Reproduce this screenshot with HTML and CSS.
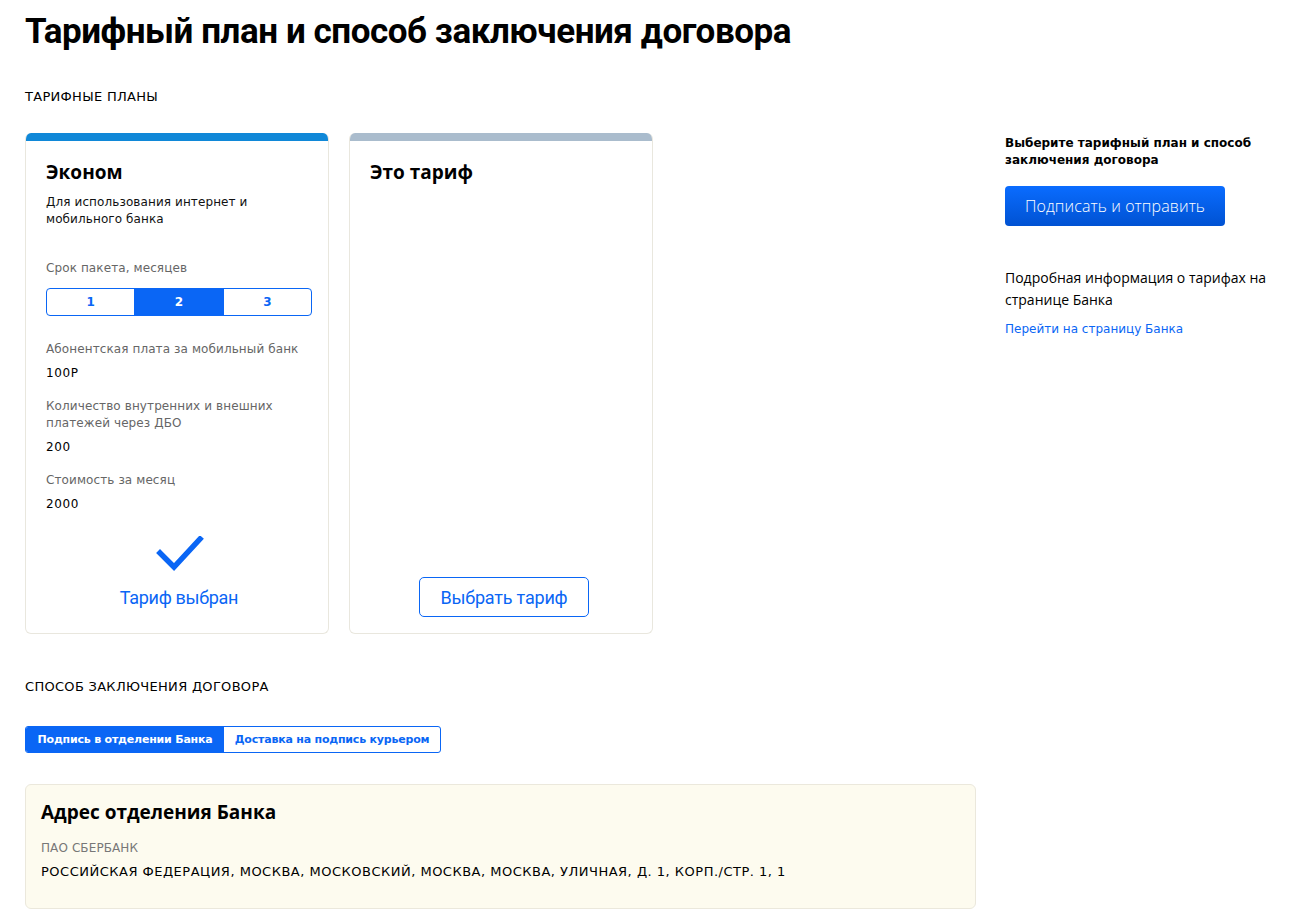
FILE: index.html
```html
<!DOCTYPE html>
<html lang="ru">
<head>
<meta charset="utf-8">
<title>Тарифный план</title>
<link rel="stylesheet" href="styles.css">
</head>
<body>
<div class="page">
  <h1 class="page-title">Тарифный план и способ заключения договора</h1>
  <div class="layout">
    <main class="main">
      <div class="section-label">ТАРИФНЫЕ ПЛАНЫ</div>
      <div class="cards">
        <div class="card card-selected">
          <div class="card-bar"></div>
          <div class="card-body">
            <div class="card-title">Эконом</div>
            <div class="card-desc">Для использования интернет и мобильного банка</div>
            <div class="field-label term-label">Срок пакета, месяцев</div>
            <div class="segment">
              <div class="seg-item">1</div>
              <div class="seg-item seg-active">2</div>
              <div class="seg-item">3</div>
            </div>
            <div class="field">
              <div class="field-label">Абонентская плата за мобильный банк</div>
              <div class="field-value">100Р</div>
            </div>
            <div class="field">
              <div class="field-label">Количество внутренних и внешних платежей через ДБО</div>
              <div class="field-value">200</div>
            </div>
            <div class="field">
              <div class="field-label">Стоимость за месяц</div>
              <div class="field-value">2000</div>
            </div>
            <div class="card-footer">
              <svg class="check" width="50" height="40" viewBox="0 0 50 40">
                <path d="M6 17 L20 31 L46 3" fill="none" stroke="#0a66f5" stroke-width="5.5" stroke-linecap="square"/>
              </svg>
              <div class="chosen">Тариф выбран</div>
            </div>
          </div>
        </div>
        <div class="card">
          <div class="card-bar bar-gray"></div>
          <div class="card-body">
            <div class="card-title">Это тариф</div>
            <div class="card-footer">
              <button class="btn-outline">Выбрать тариф</button>
            </div>
          </div>
        </div>
      </div>

      <div class="section-label method-label">СПОСОБ ЗАКЛЮЧЕНИЯ ДОГОВОРА</div>
      <div class="tabs">
        <div class="tab tab-active">Подпись в отделении Банка</div>
        <div class="tab">Доставка на подпись курьером</div>
      </div>

      <div class="address">
        <div class="address-title">Адрес отделения Банка</div>
        <div class="address-org">ПАО СБЕРБАНК</div>
        <div class="address-text">РОССИЙСКАЯ ФЕДЕРАЦИЯ, МОСКВА, МОСКОВСКИЙ, МОСКВА, МОСКВА, УЛИЧНАЯ, Д. 1, КОРП./СТР. 1, 1</div>
      </div>
    </main>
    <aside class="aside">
      <div class="aside-title">Выберите тарифный план и способ заключения договора</div>
      <button class="btn-primary">Подписать и отправить</button>
      <div class="aside-info">Подробная информация о тарифах на странице Банка</div>
      <a class="aside-link" href="#">Перейти на страницу Банка</a>
    </aside>
  </div>
</div>
</body>
</html>
```
FILE: styles.css
```css
* { box-sizing: border-box; }
body {
  margin: 0;
  background: #fff;
  color: #000;
  font-family: "DejaVu Sans", Verdana, sans-serif;
}
.page {
  padding: 8px 25px 0 25px;
}
.page-title {
  margin: 0;
  font-family: Roboto, "Noto Sans", sans-serif;
  font-weight: 700;
  font-size: 35px;
  line-height: 48px;
  letter-spacing: -0.45px;
}
.layout {
  display: flex;
}
.main {
  width: 951px;
  flex: none;
}
.section-label {
  font-size: 13px;
  line-height: 17px;
  letter-spacing: 0.3px;
  margin-top: 32px;
}
.cards {
  display: flex;
  gap: 20px;
  margin-top: 28px;
}
.card {
  width: 304px;
  height: 501px;
  border: 1px solid #e9e7de;
  border-top: none;
  border-radius: 6px;
  overflow: hidden;
  display: flex;
  flex-direction: column;
  background: #fff;
}
.card-bar {
  height: 8px;
  background: #1088d8;
  flex: none;
  margin: 0 -1px;
}
.bar-gray { background: #aabccd; }
.card-body {
  flex: 1;
  display: flex;
  flex-direction: column;
  padding: 19px 16px 16px 20px;
}
.card-title {
  font-family: "Open Sans", "Noto Sans", sans-serif;
  font-weight: 700;
  font-size: 19px;
  line-height: 24px;
}
.card-desc {
  font-size: 12px;
  line-height: 17px;
  margin-top: 10px;
  color: #111;
  letter-spacing: 0.1px;
}
.field-label {
  font-size: 12px;
  line-height: 17px;
  color: #666;
  letter-spacing: 0.1px;
}
.term-label { margin-top: 32px; }
.segment {
  display: flex;
  margin-top: 11px;
  height: 28px;
  border: 1px solid #0a66f5;
  border-radius: 4px;
  overflow: hidden;
}
.seg-item {
  flex: 1;
  display: flex;
  align-items: center;
  justify-content: center;
  font-size: 12px;
  font-weight: 700;
  color: #0a66f5;
  border-right: 1px solid #0a66f5;
}
.seg-item:last-child { border-right: none; }
.seg-active {
  background: #0a66f5;
  color: #fff;
}
.segment + .field { margin-top: 25px; }
.field { margin-top: 16px; }
.field-value {
  font-size: 12px;
  line-height: 17px;
  margin-top: 7px;
  letter-spacing: 0.6px;
}
.card-footer {
  margin-top: auto;
  display: flex;
  flex-direction: column;
  align-items: center;
}
.check {
  display: block;
  margin-bottom: 1px;
}
.chosen {
  height: 40px;
  display: flex;
  align-items: center;
  font-family: Roboto, sans-serif;
  font-size: 18px;
  letter-spacing: -0.3px;
  color: #0a66f5;
}
.btn-outline {
  height: 40px;
  padding: 0 21px;
  border: 1px solid #0a66f5;
  border-radius: 5px;
  background: #fff;
  color: #0a66f5;
  font-family: Roboto, sans-serif;
  font-size: 18px;
  letter-spacing: -0.2px;
  margin-left: 2px;
}
.method-label { margin-top: 44px; }
.tabs {
  display: flex;
  width: 416px;
  height: 27px;
  margin-top: 31px;
  border: 1px solid #0a66f5;
  border-radius: 3px;
  overflow: hidden;
}
.tab {
  display: flex;
  align-items: center;
  justify-content: center;
  font-size: 11px;
  font-weight: 700;
  letter-spacing: -0.2px;
  color: #0a66f5;
  width: 217px;
}
.tab-active {
  width: 199px;
  background: #0a66f5;
  color: #fff;
}
.address {
  margin-top: 31px;
  height: 125px;
  background: #fdfbef;
  border: 1px solid #ebe8dc;
  border-radius: 6px;
  padding: 15px 15px 0 15px;
}
.address-title {
  font-family: "Open Sans", "Noto Sans", sans-serif;
  font-weight: 700;
  font-size: 19px;
  line-height: 24px;
}
.address-org {
  font-size: 12px;
  line-height: 16px;
  color: #777;
  margin-top: 16px;
  letter-spacing: 0.1px;
}
.address-text {
  font-size: 13px;
  line-height: 17px;
  margin-top: 7px;
  letter-spacing: 0.5px;
}
.aside {
  margin-left: 29px;
  padding-top: 79px;
  width: 280px;
  display: flex;
  flex-direction: column;
  align-items: flex-start;
}
.aside-title {
  font-size: 12px;
  font-weight: 700;
  line-height: 17px;
}
.btn-primary {
  margin-top: 17px;
  width: 220px;
  height: 40px;
  border: none;
  border-radius: 4px;
  background: linear-gradient(#0a6cff, #0052d2);
  color: #fff;
  font-family: "Open Sans", "Noto Sans", sans-serif;
  font-size: 16px;
  font-weight: 300;
  letter-spacing: 0.1px;
}
.aside-info {
  margin-top: 41px;
  font-family: "Open Sans", "Noto Sans", sans-serif;
  font-size: 14px;
  line-height: 22px;
}
.aside-link {
  margin-top: 10px;
  font-size: 12px;
  line-height: 17px;
  color: #0a66f5;
  text-decoration: none;
}
```
